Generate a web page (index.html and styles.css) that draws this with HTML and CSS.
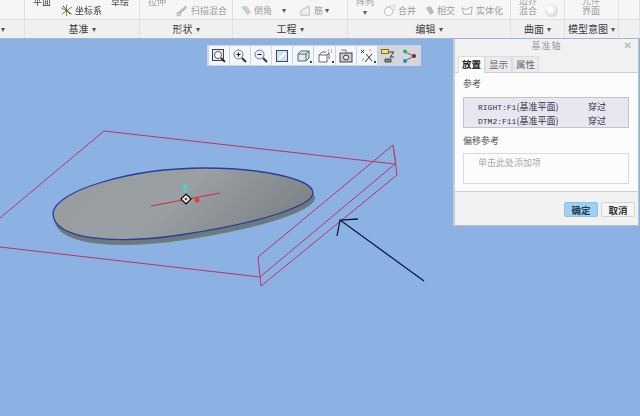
FILE: index.html
```html
<!DOCTYPE html>
<html lang="zh">
<head>
<meta charset="utf-8">
<title>基准轴</title>
<link rel="stylesheet" href="styles.css">
</head>
<body>
<div class="app">
  <header class="ribbon">
    <section class="group g0">
      <div class="tools"></div>
      <div class="label start"><span class="caret">▾</span></div>
    </section>
    <section class="group g1">
      <div class="tools">
        <span class="clip w-plane">平面</span>
        <span class="tool w-coord">
          <svg class="ico13" viewBox="0 0 14 14"><path d="M7 1v12M1 4l12 7M13 3L2 11" stroke="#8a7a30" fill="none"/><path d="M3 2l8 9" stroke="#333"/></svg>坐标系
        </span>
        <span class="clip w-sketch">草绘</span>
      </div>
      <div class="label">基准 <span class="caret">▾</span></div>
    </section>
    <section class="group g2">
      <div class="tools dim">
        <span class="clip w-ext">拉伸</span>
        <span class="tool w-sweep">
          <svg class="ico13" viewBox="0 0 14 14"><path d="M2 11l9-8" stroke="#bbb" stroke-width="3"/><circle cx="3" cy="11" r="2" fill="#ddd" stroke="#aaa"/></svg>扫描混合
        </span>
      </div>
      <div class="label">形状 <span class="caret">▾</span></div>
    </section>
    <section class="group g3">
      <div class="tools dim">
        <span class="tool w-round">
          <svg class="ico13" viewBox="0 0 14 14"><path d="M2 3l6-1 5 7-4 3z" fill="#ccc"/></svg>倒角<span class="caret gap">▾</span>
        </span>
        <span class="tool w-rib">
          <svg class="ico13" viewBox="0 0 14 14"><path d="M2 12V7l9-5v10z" fill="#eee" stroke="#bbb"/></svg>筋 <span class="caret">▾</span>
        </span>
      </div>
      <div class="label">工程 <span class="caret">▾</span></div>
    </section>
    <section class="group g4">
      <div class="tools dim">
        <span class="clip w-array">阵列<span class="caret block">▾</span></span>
        <span class="tool w-merge">
          <svg class="ico13" viewBox="0 0 14 14"><circle cx="6" cy="8" r="4.5" fill="#fafafa" stroke="#bbb"/><path d="M6 3l6-2v6" fill="none" stroke="#ccc"/></svg>合并
        </span>
        <span class="tool w-cross">
          <svg class="ico11" viewBox="0 0 12 12"><path d="M2 3l5-2 4 7-4 3z" fill="#bbb"/></svg>相交
        </span>
        <span class="tool w-solid">
          <svg class="ico13" viewBox="0 0 14 14"><path d="M1 4l4 2 7-3-1 8H3z" fill="#fafafa" stroke="#aaa"/></svg>实体化
        </span>
      </div>
      <div class="label">编辑 <span class="caret">▾</span></div>
    </section>
    <section class="group g5">
      <div class="tools dim">
        <span class="clip lines w-bound">边界<br>混合</span>
        <span class="sphere"></span>
      </div>
      <div class="label">曲面 <span class="caret">▾</span></div>
    </section>
    <section class="group g6">
      <div class="tools dim">
        <span class="clip lines w-comp">元件<br>界面</span>
      </div>
      <div class="label">模型意图 <span class="caret">▾</span></div>
    </section>
    <section class="group g7">
      <div class="tools"></div>
      <div class="label"></div>
    </section>
  </header>

  <main class="viewport">
    <svg class="scene" viewBox="0 38 640 378" width="640" height="378">
      <defs>
        <linearGradient id="diskFill" x1="0" y1="0" x2="1" y2="0.300">
          <stop offset="0" stop-color="#979c9f"/>
          <stop offset="0.550" stop-color="#9a9fa3"/>
          <stop offset="1" stop-color="#7f8588"/>
        </linearGradient>
      </defs>
      <path class="datum" d="M0 217L104 130L395 163L260 276L0 246"/>
      <path class="datum" d="M258 256L393 144L397 174L261 285Z"/>
      <path class="datum thin" d="M393 144L396 163"/>
      <path class="disk-side" transform="translate(1.500 5)" d="M53 212C55 190 130 167 205 167C262 167 313 178 313 192C313 204 262 222 180 234C118 243 53 240 53 212Z"/>
      <path class="disk-top" d="M53 212C55 190 130 167 205 167C262 167 313 178 313 192C313 204 262 222 180 234C118 243 53 240 53 212Z"/>
      <path class="axis" d="M151 205L220 192"/>
      <path class="handle-y" d="M185 197V188"/>
      <circle class="dot-y" cx="185" cy="186" r="2.500"/>
      <path class="handle-z" d="M188 197L193 194"/>
      <circle class="dot-x" cx="197" cy="199" r="2.500"/>
      <rect class="pivot" x="182.500" y="194.500" width="7" height="7" transform="rotate(45 186 198)"/>
      <circle class="pivot-dot" cx="186" cy="198" r="1.500"/>
      <path class="arrow" d="M424 280L340 219M358 218L340 219L337 235"/>
    </svg>

    <nav class="viewbar">
      <span class="vb"><svg viewBox="0 0 16 16"><rect x="1.500" y="1.500" width="11" height="11" fill="#dfe8f2" stroke="#445"/><circle cx="7" cy="7" r="3.500" fill="#fff" stroke="#556"/><path d="M10 10l4 4" stroke="#333" stroke-width="2"/></svg></span>
      <span class="vb"><svg viewBox="0 0 16 16"><circle cx="6.500" cy="6.500" r="4.500" fill="#eef" stroke="#778"/><path d="M4.500 6.500h4M6.500 4.500v4" stroke="#111"/><path d="M10 10l4 4" stroke="#333" stroke-width="2"/></svg></span>
      <span class="vb"><svg viewBox="0 0 16 16"><circle cx="6.500" cy="6.500" r="4.500" fill="#eef" stroke="#778"/><path d="M4.500 6.500h4" stroke="#111"/><path d="M10 10l4 4" stroke="#333" stroke-width="2"/></svg></span>
      <span class="vb"><svg viewBox="0 0 16 16"><rect x="2.500" y="2.500" width="11" height="11" fill="#cfe0ee" stroke="#34506e"/><path d="M5 11l6-6" stroke="#fff" stroke-width="2"/></svg></span>
      <span class="vb"><svg viewBox="0 0 16 16"><path d="M3 6l3-3h8v7l-3 3H3z" fill="#d8f0e8" stroke="#567"/><path d="M3 6h8v7M11 6l3-3" fill="none" stroke="#567"/></svg><i class="more"></i></span>
      <span class="vb"><svg viewBox="0 0 16 16"><path d="M2 7h8v7H2z" fill="#fff" stroke="#667"/><path d="M2 7l3-3h4M10 7l2-2v6" fill="none" stroke="#667"/><path d="M11 2h1M14 2h1M11 4h1M14 4h1" stroke="#a66"/></svg><i class="more"></i></span>
      <span class="vb"><svg viewBox="0 0 16 16"><rect x="2" y="5" width="12" height="9" fill="#ccc" stroke="#444"/><circle cx="8" cy="9.500" r="2.500" fill="#eee" stroke="#333"/><path d="M3 2h5v3" fill="none" stroke="#777"/></svg></span>
      <span class="vb"><svg viewBox="0 0 16 16"><path d="M2 2l3 3M5 2L2 5M7 6l6 7M13 6l-7 8" stroke="#333" fill="none"/><path d="M10 2h2" stroke="#c86"/><path d="M3 13l2-3" stroke="#c8a020"/></svg><i class="more"></i></span>
      <span class="vb on"><svg viewBox="0 0 16 16"><rect x="1.500" y="1.500" width="7" height="4" fill="#f0e070" stroke="#887020"/><path d="M9 4h5l-4 5h4" fill="none" stroke="#333"/><path d="M5 11h6v3H5z" fill="#889" stroke="#445"/></svg></span>
      <span class="vb on"><svg viewBox="0 0 16 16"><path d="M4 4l9 4M4 13l9-5" stroke="#666"/><circle cx="4" cy="3.500" r="2" fill="#2aa88a"/><circle cx="13" cy="8" r="2" fill="#8a1f3a"/><circle cx="4" cy="13" r="2" fill="#2a88c8"/></svg></span>
    </nav>

    <aside class="dialog">
      <div class="title">基准轴<span class="close">✕</span></div>
      <div class="tabs">
        <span class="tab active">放置</span>
        <span class="tab">显示</span>
        <span class="tab">属性</span>
      </div>
      <div class="panel">
        <div class="cap">参考</div>
        <div class="list refs">
          <div class="row"><span class="ref"><span class="mono">RIGHT:F1</span>(基准平面)</span><span>穿过</span></div>
          <div class="row"><span class="ref"><span class="mono">DTM2:F11</span>(基准平面)</span><span>穿过</span></div>
        </div>
        <div class="cap offset">偏移参考</div>
        <div class="list empty">单击此处添加项</div>
      </div>
      <div class="actions">
        <button class="btn primary">确定</button>
        <button class="btn">取消</button>
      </div>
    </aside>
  </main>
</div>
</body>
</html>
```
FILE: styles.css
```css
* { box-sizing: border-box; }
html, body { margin: 0; padding: 0; }
body {
  width: 640px;
  height: 416px;
  overflow: hidden;
  font-family: "Noto Sans CJK SC", "Liberation Sans", sans-serif;
  font-size: 9px;
  color: #333;
  background: #8cb2e3;
}
.app { width: 640px; height: 416px; display: flex; flex-direction: column; filter: blur(0.4px); }

/* ribbon */
.ribbon {
  display: grid;
  grid-template-columns: 25px 115px 93px 115px 163px 54px 54px 21px;
  height: 39px;
  flex: none;
  border-bottom: 1px solid #a4b6cf;
}
.group { display: flex; flex-direction: column; border-right: 1px solid #e0e0e0; min-width: 0; }
.tools {
  height: 20px;
  flex: none;
  display: flex;
  overflow: hidden;
  background: #f6f6f6;
  border-bottom: 1px solid #dedede;
  color: #3a3a3a;
}
.tools.dim { color: #9c9c9c; }
.label {
  flex: 1;
  display: flex;
  align-items: center;
  justify-content: center;
  gap: 3px;
  background: #f0f0f0;
  color: #3c3c3c;
  font-size: 10px;
  line-height: 18px;
  white-space: nowrap;
}
.label.start { justify-content: flex-start; padding-left: 1px; }
.caret { font-size: 8px; color: #555; line-height: 1; }
.caret.gap { margin-left: 8px; }
.caret.block { display: block; text-align: center; line-height: 9px; }
.tool { display: flex; align-items: center; gap: 2px; white-space: nowrap; padding-top: 1px; flex: none; }
.clip { display: block; white-space: nowrap; line-height: 10px; margin-top: -3px; flex: none; }
.clip.lines { margin-top: -4px; line-height: 10px; }
.ico13 { width: 13px; height: 13px; flex: none; }
.ico11 { width: 11px; height: 11px; flex: none; }

.w-plane { margin-left: 8px; }
.w-coord { margin-left: 9px; }
.w-sketch { margin-left: 9px; }
.w-ext { margin-left: 8px; }
.w-sweep { margin-left: 10px; }
.w-round { margin-left: 6px; }
.w-rib { margin-left: 13px; }
.w-array { margin-left: 8px; }
.w-merge { margin-left: 9px; }
.w-cross { margin-left: 8px; }
.w-solid { margin-left: 6px; }
.w-bound { margin-left: 8px; }
.w-comp { margin-left: 17px; }
.sphere {
  width: 13px;
  height: 13px;
  margin: 4px 0 0 8px;
  flex: none;
  border-radius: 50%;
  background: radial-gradient(circle at 40% 40%, #fff 20%, #c9c9c9 85%);
}

/* viewport */
.viewport { position: relative; flex: 1; overflow: hidden; background: #8cb2e3; }
.scene { display: block; }
.datum { fill: none; stroke: #bb3468; stroke-width: 1; }
.datum.thin { stroke: #a5506a; }
.disk-side { fill: #6c7a7c; stroke: #6c7a7c; stroke-width: 0.800; }
.disk-top { fill: url(#diskFill); stroke: #2b3d9a; stroke-width: 1.300; }
.axis { stroke: #c8303f; stroke-width: 1.200; }
.handle-y { stroke: #6cc4c4; stroke-width: 1.500; }
.dot-y { fill: #4fd0d0; }
.handle-z { stroke: #5cb870; stroke-width: 1.500; }
.dot-x { fill: #e63b4c; }
.pivot { fill: #fff; stroke: #000; stroke-width: 1.200; }
.pivot-dot { fill: #b03040; }
.arrow { fill: none; stroke: #0c1c48; stroke-width: 1.300; }

.viewbar {
  position: absolute;
  left: 207px;
  top: 6px;
  width: 214px;
  height: 21px;
  display: flex;
  gap: 1px;
  padding: 1px 2px;
  background: #c9d6e8;
}
.vb {
  position: relative;
  flex: 1;
  display: flex;
  align-items: center;
  justify-content: center;
  background: #f6f7f9;
}
.vb.on { background: #d4d6d8; }
.vb svg { width: 16px; height: 16px; }
.more {
  position: absolute;
  right: 1px;
  bottom: 2px;
  width: 2px;
  height: 2px;
  background: #444;
}

/* dialog */
.dialog {
  position: absolute;
  left: 453px;
  top: -3px;
  width: 186px;
  height: 190px;
  display: flex;
  flex-direction: column;
  background: #f1f1f1;
  border: 1px solid #b9c0c9;
  border-left: 2px solid #c8ccd2;
}
.title {
  position: relative;
  height: 19px;
  flex: none;
  text-align: center;
  line-height: 18px;
  color: #9a9a9a;
  letter-spacing: 1px;
}
.close { position: absolute; right: 5px; top: 0; font-size: 10px; color: #aaa; font-family: "DejaVu Sans", sans-serif; }
.tabs { display: flex; height: 16px; flex: none; padding-left: 3px; }
.tab {
  width: 27px;
  height: 16px;
  line-height: 15px;
  text-align: center;
  font-size: 9.500px;
  color: #667;
  background: #ebebeb;
  border: 1px solid #dcdcdc;
  border-bottom: none;
}
.tab.active { color: #222; font-weight: 700; background: #fcfcfc; height: 17px; position: relative; z-index: 1; }
.panel {
  height: 120px;
  flex: none;
  background: #fcfcfc;
  border-top: 1px solid #d0d0d0;
  border-bottom: 1px solid #d0d0d0;
  padding: 4px 9px 0 8px;
}
.cap { line-height: 14px; color: #555; }
.cap.offset { margin-top: 6px; }
.list {
  height: 31px;
  margin-top: 5px;
  padding: 2px 0 0 14px;
  background: #e9e6f1;
  border: 1px solid #c4c4c8;
}
.list.refs { margin-top: 6px; }
.row { display: flex; height: 14px; line-height: 14px; font-size: 9px; color: #334; white-space: nowrap; }
.ref { width: 110px; flex: none; }
.mono { font-family: "Liberation Mono", monospace; font-size: 8px; }
.list.empty { background: #fcfcfc; border-color: #dadada; color: #aaa; line-height: 13px; font-size: 9px; }
.actions { flex: 1; display: flex; justify-content: flex-end; align-items: center; gap: 3px; padding: 1px 3px 0 0; }
.btn {
  width: 34px;
  height: 15px;
  padding: 0;
  font: 700 9.500px/14px "Noto Sans CJK SC", sans-serif;
  color: #333;
  background: #f4f4f4;
  border: 1px solid #d4d4d4;
  border-radius: 2px;
}
.btn.primary { background: #9fd0ee; border-color: #8cc0e4; color: #1f3a55; }
```
